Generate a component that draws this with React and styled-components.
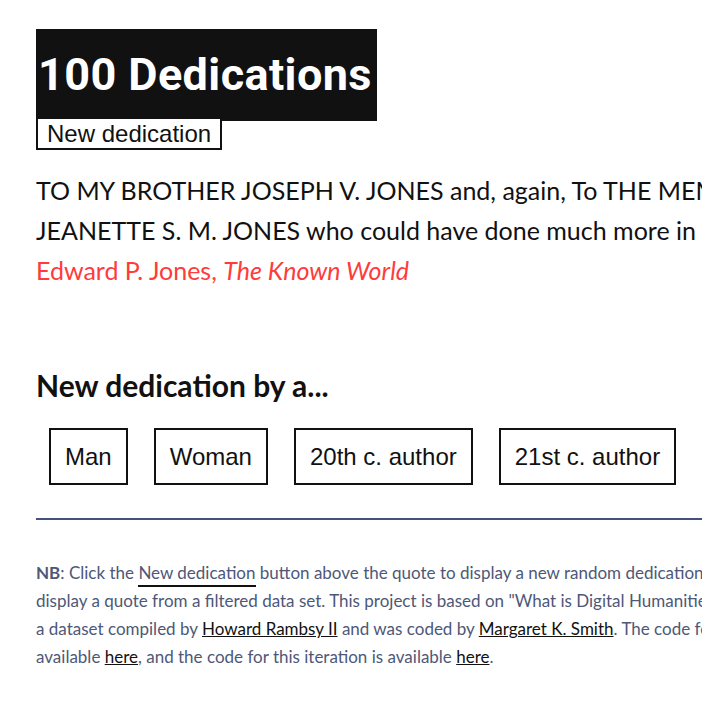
import React from 'react';
import styled, { createGlobalStyle } from 'styled-components';

const GlobalStyle = createGlobalStyle`
  html, body {
    margin: 0;
    padding: 0;
    background: #fff;
    overflow: hidden;
  }
`;

const Page = styled.main`
  width: 1000px;
  padding: 29px 36px 40px;
  font-family: Lato, "Open Sans", sans-serif;
  color: #111;
`;

const Header = styled.header`
  display: flex;
  flex-direction: column;
  align-items: flex-start;
`;

const Title = styled.h1`
  display: inline-block;
  margin: 0;
  padding: 0 5px 0 2px;
  background: #111;
  color: #fff;
  font-family: Roboto, "Liberation Sans", sans-serif;
  font-weight: 700;
  font-size: 45px;
  line-height: 92px;
  letter-spacing: 0.4px;
`;

const Button = styled.button`
  position: relative;
  margin: ${({ $first }) => ($first ? '-4px 0 0' : '0 13px')};
  padding: ${({ $big }) => ($big ? '0 14px' : '0 9px')};
  height: ${({ $big }) => ($big ? '57px' : '33px')};
  background: #fff;
  border: 2px solid #111;
  border-radius: 0;
  color: #111;
  font-family: "Liberation Sans", Arial, sans-serif;
  font-size: 24px;
  cursor: pointer;
`;

const Quote = styled.blockquote`
  margin: 20px 0 0;
  font-size: 25px;
  line-height: 40px;
  font-weight: 400;
  white-space: nowrap;
`;

const Author = styled.div`
  color: #ff3b3b;
  em {
    font-style: italic;
  }
`;

const SubTitle = styled.h2`
  margin: 75px 0 0;
  font-size: 30px;
  font-weight: 700;
  line-height: 40px;
`;

const FilterRow = styled.div`
  display: flex;
  margin-top: 23px;
`;

const Rule = styled.hr`
  margin: 33px 0 0;
  border: 0;
  height: 2px;
  background: #44507f;
`;

const Note = styled.p`
  margin: 39px 0 0;
  font-size: 17px;
  line-height: 28px;
  color: #4d5878;
  white-space: nowrap;
  b {
    font-weight: 700;
  }
`;

const Link = styled.a`
  color: #111;
  text-decoration: underline;
`;

const FakeLink = styled.span`
  border-bottom: 2px solid #111;
  padding-bottom: 2px;
`;

export default function App() {
  return (
    <>
      <GlobalStyle />
      <Page>
        <Header>
          <Title>100 Dedications</Title>
          <Button $first>New dedication</Button>
        </Header>
        <Quote>
          TO MY BROTHER JOSEPH V. JONES and, again, To THE MEMORY OF MY MOTHER,
          <br />
          JEANETTE S. M. JONES who could have done much more in this world
          <Author>
            Edward P. Jones, <em>The Known World</em>
          </Author>
        </Quote>
        <SubTitle>New dedication by a...</SubTitle>
        <FilterRow>
          <Button $big style={{ marginLeft: 13 }}>Man</Button>
          <Button $big>Woman</Button>
          <Button $big>20th c. author</Button>
          <Button $big>21st c. author</Button>
        </FilterRow>
        <Rule />
        <Note>
          <b>NB</b>: Click the <FakeLink>New dedication</FakeLink> button above the quote to display a new random dedication, or click one of the buttons below to
          <br />
          display a quote from a filtered data set. This project is based on "What is Digital Humanities?" and
          <br />
          a dataset compiled by <Link href="#">Howard Rambsy II</Link> and was coded by <Link href="#">Margaret K. Smith</Link>. The code for the original project is
          <br />
          available <Link href="#">here</Link>, and the code for this iteration is available <Link href="#">here</Link>.
        </Note>
      </Page>
    </>
  );
}
